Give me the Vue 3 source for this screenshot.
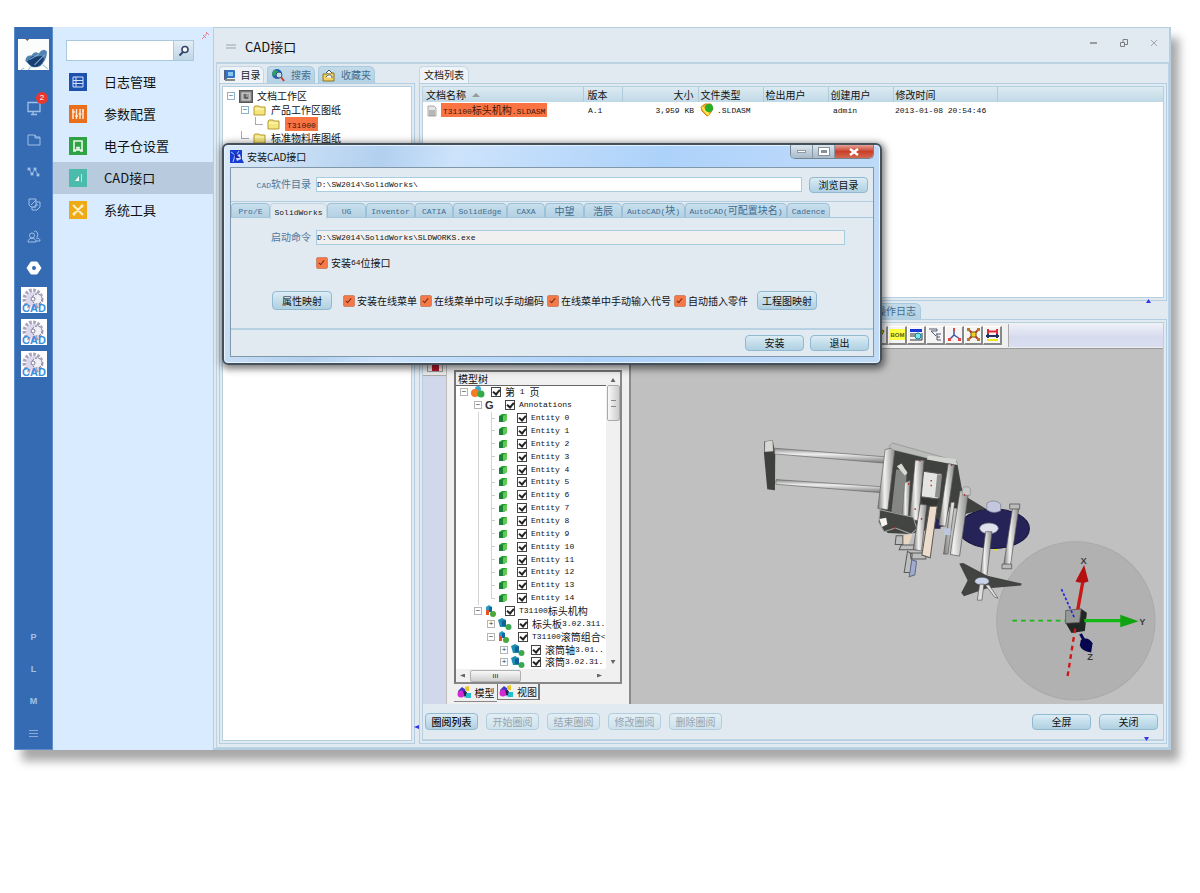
<script setup>
import { h, ref } from 'vue'

// Sets Latin runs in the half-width monospace face next to full-width Chinese.
const Mix = (props) =>
  props.t
    .split(/([\x20-\x7e]+)/)
    .filter(Boolean)
    .map((s) => h('span', { class: /^[\x20-\x7e]/.test(s) ? 'half' : 'full' }, s))
Mix.props = ['t']

const menu = [
  { name: '日志管理', color: '#1c52ae', icon: 'log' },
  { name: '参数配置', color: '#e96f1d', icon: 'param' },
  { name: '电子仓设置', color: '#2da343', icon: 'vault' },
  { name: 'CAD接口', color: '#4bbcac', icon: 'cad', active: true },
  { name: '系统工具', color: '#efab17', icon: 'tool' },
]
const rail = ['monitor', 'folder', 'flow', 'copy', 'people', 'gear']
const cadTabs = [
  ['Pro/E', 39], ['SolidWorks', 57], ['UG', 39], ['Inventor', 49], ['CATIA', 38], ['SolidEdge', 54],
  ['CAXA', 38], ['中望', 39], ['浩辰', 38], ['AutoCAD(块)', 63], ['AutoCAD(可配置块名)', 102], ['Cadence', 43],
].map(([name, w]) => ({ name, w }))
const options = ['安装在线菜单', '在线菜单中可以手动编码', '在线菜单中手动输入代号', '自动插入零件']
const model = [
  { d: 0, s: '−', k: 'page', t: '第 1 页' },
  { d: 1, s: '−', k: 'g', t: 'Annotations' },
  ...Array.from({ length: 15 }, (_, i) => ({ d: 2, s: '', k: 'cube', t: `Entity ${i}` })),
  { d: 1, s: '−', k: 'asm', t: 'T31100标头机构' },
  { d: 2, s: '+', k: 'part', t: '标头板3.02.311.' },
  { d: 2, s: '−', k: 'asm', t: 'T31100滚筒组合<' },
  { d: 3, s: '+', k: 'part', t: '滚筒轴3.01..' },
  { d: 3, s: '+', k: 'part', t: '滚筒3.02.31.' },
]
const review = ['圈阅列表', '开始圈阅', '结束圈阅', '修改圈阅', '删除圈阅']
const tools = ['cut', 'bom', 'find', 'tree', 'axis', 'burst', 'measure']
const path = ref('D:\\SW2014\\SolidWorks\\')
const command = ref('D:\\SW2014\\SolidWorks\\SLDWORKS.exe')
</script>

<template>
  <div class="page">
  <div class="window">
    <nav class="rail">
      <svg class="avatar" viewBox="0 0 30 30">
        <rect width="30" height="30" fill="#fbfdfd" />
        <path d="M7 21Q8 15 13 16Q16 11 20 14Q24 8 28 12Q28 18 25 22Q22 29 13 27Z" fill="#5283b1" />
        <path d="M9 22Q13 15 19 17Q25 15 25 20Q22 27 16 27Q11 26 9 22Z" fill="#173f72" />
        <path d="M11 20L20 15M16 25L26 15" stroke="#86aed0" />
        <path d="M6 28L3 30M12 27L10 30M24 25L29 29" stroke="#9bc1c7" fill="none" />
        <path d="M7 0h4l-2 2z" fill="#8a6349" />
      </svg>
      <a v-for="r in rail" :key="r" href="#" class="rail-item" :aria-label="r">
        <svg width="16" height="16" viewBox="0 0 16 16" fill="none" stroke="#9fbfe6">
          <g v-if="r === 'monitor'"><path d="M2 2.500h12v9H2zM7 12v2M5 14.500h6" stroke-width="1.300" /></g>
          <path v-else-if="r === 'folder'" d="M2 3h7l1 2h4v8H2zM9 3v3h5" />
          <g v-else-if="r === 'flow'" fill="#9fbfe6" stroke-width=".8"><rect x="2" y="4" width="2" height="2" /><rect x="8" y="4" width="2" height="2" /><rect x="5" y="9" width="2" height="2" /><rect x="11" y="10" width="2" height="2" /><path d="M3 5l3 5l3-5l3 6" fill="none" /></g>
          <path v-else-if="r === 'copy'" d="M3 3h7v8H5L3 9zM6 11v3h5l3-3V6h-4M5 9l5-5M8 12a3 3 0 0 1 4-3" />
          <path v-else-if="r === 'people'" d="M6 5a2.500 2.500 0 1 1 0 5a2.500 2.500 0 1 1 0-5M2 14c0-5 8-5 8 0zM8 4a2 3 0 1 1 3 5M10 10c3 0 4 1 4 3h-4" />
          <g v-else fill="#fff" stroke="none"><path d="M5 2h6l4 6l-4 6H5L1 8z" stroke="#fff" stroke-linejoin="round" /><circle cx="8" cy="8" r="2" fill="#356bb3" /></g>
        </svg>
        <b v-if="r === 'monitor'" class="badge">2</b>
      </a>
      <a v-for="n in 3" :key="n" href="#" class="rail-item cad">
        <svg width="26" height="26" viewBox="0 0 26 26">
          <rect width="26" height="26" fill="#fff" />
          <circle cx="12" cy="12" r="8.500" fill="none" stroke="#aaa4c0" stroke-width="4" stroke-dasharray="2.600 1.400" />
          <circle cx="12" cy="12" r="7" fill="#dcd7ec" />
          <circle cx="16" cy="12" r="5" fill="#eef0f6" stroke="#6c6c7c" stroke-dasharray="2 1.500" />
          <circle cx="12" cy="12" r="2" fill="#fff" stroke="#86809a" />
          <text x="13" y="25" text-anchor="middle" class="cad-word">CAD</text>
        </svg>
      </a>
      <span class="grow"></span>
      <span class="rail-item letter">P</span>
      <span class="rail-item letter">L</span>
      <span class="rail-item letter">M</span>
      <button class="rail-item letter bars" aria-label="菜单"><i></i><i></i><i></i></button>
    </nav>

    <aside class="side">
      <svg class="pin" width="7" height="7" viewBox="0 0 7 7"><path d="M2 5L0 7M1 3L4 6M3 4L5 1M4 0L7 3" stroke="#ee7e84" /></svg>
      <form class="search" @submit.prevent>
        <input type="text" aria-label="搜索" />
        <button aria-label="查找">
          <svg width="12" height="12" viewBox="0 0 12 12"><circle cx="7" cy="4.500" r="3" fill="#fff" stroke="#34466b" stroke-width="1.600" /><path d="M5 7L1.500 10.500" stroke="#34466b" stroke-width="2" /></svg>
        </button>
      </form>
      <a v-for="m in menu" :key="m.name" href="#" class="menu-item" :class="{ active: m.active }">
        <svg width="18" height="18" viewBox="0 0 18 18" fill="none" stroke="#fff">
          <rect width="18" height="18" :fill="m.color" stroke="none" />
          <path v-if="m.icon === 'log'" d="M4 4h10v10H4zM7 4v10M4 7.500h10M4 10.500h10" stroke="#d4e0f5" />
          <path v-else-if="m.icon === 'param'" d="M4 4v10M7.500 4v10M11 4v10M14 4v10M3 7h3M6 11h3M9.500 9h3M13 6h2" stroke="#ffe6d2" stroke-width="1.500" />
          <path v-else-if="m.icon === 'vault'" d="M5 4h8v9H5zM8 13v-2.500h2V13M4 14h3M11 14h3" stroke="#eaf7ea" stroke-width="1.600" />
          <g v-else-if="m.icon === 'cad'"><path d="M6 12l4-5v5z" fill="#fff" stroke="none" /><path d="M12.500 5v8" stroke="#b9e6df" /></g>
          <path v-else d="M4 4l10 10M14 4L4 14M4 4l2 2M12 4l2 2M4 12l2 2" stroke="#fff0c5" stroke-width="2" />
        </svg>
        <span>{{ m.name }}</span>
      </a>
    </aside>

    <main class="main">
      <header class="titlebar">
        <i class="grip"></i>
        <h1>CAD接口</h1>
        <button aria-label="最小化"><svg width="10" height="10"><path d="M1 5h7" stroke="#7c8085" stroke-width="1.500" /></svg></button>
        <button aria-label="还原"><svg width="10" height="10" fill="none" stroke="#7c8085"><path d="M1.500 4.500h4v4h-4zM4 4V1.500h4.500v5H6" /></svg></button>
        <button aria-label="关闭窗口"><svg width="10" height="10"><path d="M2 2l6 6M8 2L2 8" stroke="#a2a5aa" /></svg></button>
      </header>

      <div class="body">
        <section class="left">
          <div class="tabs">
            <button class="tab on t1"><svg width="13" height="13" viewBox="0 0 13 13"><rect x="1" y="1" width="3" height="10" fill="#555f80" /><rect x="3" y="1" width="9" height="8" rx="1" fill="#3172c4" /><rect x="5" y="3" width="5" height="4" fill="#8ac6ef" /><path d="M2 11h10" stroke="#888" stroke-width="2" /></svg>目录</button>
            <button class="tab t2"><svg width="15" height="14" viewBox="0 0 15 14"><circle cx="6" cy="6" r="5" fill="#2362b8" /><path d="M3 2l4 1v3l-4 2l-2-2zM8 6l3 1l-2 3z" fill="#2da65a" /><circle cx="8" cy="7" r="3" fill="#b9e1f5" stroke="#3a4a70" /><path d="M10 9l3 4" stroke="#d23b30" stroke-width="2" /></svg>搜索</button>
            <button class="tab t3"><svg width="14" height="13" viewBox="0 0 14 13"><path d="M1 5h4l1-1h6v8H1z" fill="#f0d264" stroke="#8d7420" /><path d="M4 4l3-3l3 3M4 8c2-3 6-3 6 1" stroke="#34507c" fill="#fff" /></svg>收藏夹</button>
          </div>
          <div class="frame tree-frame">
            <ul class="dir">
              <li><i class="pm">−</i><svg width="14" height="13" viewBox="0 0 14 13"><rect x=".5" y=".5" width="13" height="12" fill="#777" stroke="#555" /><rect x="3" y="3" width="8" height="7" fill="#999" stroke="#ddd" /><path d="M6 4v4h3" stroke="#333" fill="none" /></svg>文档工作区</li>
              <li class="d1"><i class="pm">−</i><svg class="fold" width="14" height="11" viewBox="0 0 14 11"><path d="M1 2l1-1h4l1 1h5v8H1z" fill="#f5e67c" stroke="#b69a36" /><path d="M2 4h9" stroke="#fffbd0" /></svg>产品工作区图纸</li>
              <li class="d2"><i class="elbow"></i><svg class="fold" width="14" height="11" viewBox="0 0 14 11"><path d="M1 2l1-1h4l1 1h5v8H1z" fill="#f5e67c" stroke="#b69a36" /><path d="M2 4h9" stroke="#fffbd0" /></svg><mark><Mix t="T31000" /></mark></li>
              <li class="d1"><i class="elbow"></i><svg class="fold" width="14" height="11" viewBox="0 0 14 11"><path d="M1 2l1-1h4l1 1h5v8H1z" fill="#f5e67c" stroke="#b69a36" /><path d="M2 4h9" stroke="#fffbd0" /></svg>标准物料库图纸</li>
            </ul>
          </div>
        </section>

        <section class="right">
          <div class="docs">
            <div class="tabs"><button class="tab on doc-tab">文档列表</button></div>
            <div class="frame">
              <table>
                <colgroup><col class="c160" /><col class="c39" /><col class="c76" /><col class="c65" /><col class="c65" /><col class="c65" /><col class="c104" /><col /></colgroup>
                <thead><tr><th>文档名称<i class="sort"></i></th><th>版本</th><th class="num">大小</th><th>文件类型</th><th>检出用户</th><th>创建用户</th><th>修改时间</th><th></th></tr></thead>
                <tbody><tr>
                  <td class="name"><svg width="12" height="12" viewBox="0 0 12 12"><path d="M2 1h6l2 2v8H2z" fill="#e5e5e5" stroke="#aaa" /><path d="M3 6h6M3 8h6M3 10h6" stroke="#888" /></svg><mark><Mix t="T31100标头机构.SLDASM" /></mark></td>
                  <td><Mix t="A.1" /></td>
                  <td class="num"><Mix t="3,959 KB" /></td>
                  <td class="type"><svg width="14" height="14" viewBox="0 0 14 14"><path d="M1 4l4-3h6l2 5l-4 6l-2 1l-5-5z" fill="#f4ad25" stroke="#cf8115" /><path d="M2 4l4 5l3 3" stroke="#ffec59" stroke-width="2" /><circle cx="9" cy="5" r="4" fill="#28ae28" /></svg><Mix t=".SLDASM" /></td>
                  <td></td><td><Mix t="admin" /></td><td><Mix t="2013-01-08 20:54:46" /></td><td></td>
                </tr></tbody>
              </table>
            </div>
            <i class="fold-mark above"></i>
          </div>

          <div class="preview">
            <div class="tabs"><button class="tab log-tab">操作日志</button></div>
            <div class="frame preview-frame">
              <div class="toolbar">
                <div class="tool-set">
                  <button v-for="t in tools" :key="t" :aria-label="t">
                    <svg width="15" height="15" viewBox="0 0 15 15" fill="none">
                      <g v-if="t === 'cut'"><path d="M2 5l7-3l4 2l-5 8z" fill="#e4dc15" stroke="#5d5b10" /><path d="M1 9h4v5H1z" fill="#a01035" /></g>
                      <g v-else-if="t === 'bom'"><rect y="2" width="15" height="11" fill="#ffff41" /><text x="7.500" y="10" text-anchor="middle" class="bom">BOM</text></g>
                      <g v-else-if="t === 'find'"><path d="M1 2h12v3H1z" fill="#1937d8" /><path d="M1 7h6M1 9h5M1 13h12V6" stroke="#333" /><circle cx="9" cy="9" r="3" fill="#79e9ee" stroke="#167d8c" /></g>
                      <path v-else-if="t === 'tree'" d="M1 2h8v2H3M3 4l5 5M8 7h5M9 7v6h4M9 10h3" stroke="#55596e" />
                      <g v-else-if="t === 'axis'"><path d="M7 2v6l-5 5M7 8l6 4" stroke="#4052a0" stroke-width="1.500" /><path d="M6 1h2v3H6zM1 11h3v3H1zM11 11h3v3h-3z" fill="#e34444" /></g>
                      <g v-else-if="t === 'burst'"><path d="M2 2l11 11M13 2L2 13" stroke="#c93525" stroke-width="2" /><rect x="5" y="5" width="5" height="5" fill="#f2cf24" stroke="#705d12" /><path d="M1 1h3v3H1zM11 1h3v3h-3zM1 11h3v3H1zM11 11h3v3h-3z" fill="#b77b20" /></g>
                      <g v-else><path d="M2 2h2v5H2zM11 2h2v5h-2z" fill="#e12a36" /><path d="M3 4.500h9" stroke="#e12a36" stroke-width="2" /><path d="M1 9h13M3 7v4M12 7v4" stroke="#222f5c" stroke-width="2" /><path d="M2 13h11" stroke="#eee51e" stroke-width="2" /></g>
                    </svg>
                  </button>
                </div>
                <div class="tool-fill"></div>
              </div>

              <div class="viewer">
                <div class="strip"><div class="strip-btn"><i></i></div></div>
                <div class="pane">
                  <div class="treebox">
                    <div class="tree-head">模型树</div>
                    <div class="tree-mid">
                      <ul class="model">
                        <li v-for="(m, i) in model" :key="i" :class="['lv' + m.d, { leaf: !m.s, endleaf: i === 16 }]">
                          <i v-if="m.s" class="pm gray">{{ m.s }}</i><i v-else class="dash"></i>
                          <svg width="14" height="12" viewBox="0 0 14 12">
                            <g v-if="m.k === 'page'"><circle cx="7" cy="3" r="3" fill="#38a9d2" /><circle cx="4" cy="7" r="4" fill="#f47a25" /><circle cx="10" cy="8" r="3.500" fill="#34a946" /></g>
                            <text v-else-if="m.k === 'g'" x="0" y="10" class="gmark">G</text>
                            <g v-else-if="m.k === 'cube'"><path d="M2 4l3-2h5v6l-3 2H2z" fill="#259e35" /><path d="M6 4l4-2v6l-4 2z" fill="#61cb52" /><path d="M2 4h4v6H2z" fill="#188238" /></g>
                            <g v-else-if="m.k === 'asm'"><path d="M1 2l3-2l3 2v5H1z" fill="#2b9bc4" /><path d="M1 5h3v5H1z" fill="#e85026" /><path d="M4 2h3v5H4z" fill="#1366a6" /><circle cx="8" cy="9" r="3" fill="#47a83c" /></g>
                            <g v-else><path d="M0 2l4-2l4 2v7H2z" fill="#1b8fb2" /><path d="M4 3l4-1v6H4z" fill="#126099" /><circle cx="10.500" cy="9" r="3" fill="#3ca851" /></g>
                          </svg>
                          <label><input type="checkbox" checked /><Mix :t="m.t" /></label>
                        </li>
                      </ul>
                      <div class="vbar"><i class="arrow up"></i><b></b><i class="arrow down"></i></div>
                    </div>
                    <div class="hbar"><i class="arrow lt"></i><b>ııı</b><span></span><i class="arrow rt"></i><span class="corner"></span></div>
                  </div>
                  <div class="pane-tabs">
                    <button><svg width="15" height="13" viewBox="0 0 15 13"><path d="M1 5l4-4l4 3v6H2z" fill="#3d36c5" /><circle cx="4" cy="8" r="3.500" fill="#d329d2" /><path d="M8 1l4-1v5H8z" fill="#e9c525" /><path d="M9 7h5v5H9z" fill="#24bed1" /><path d="M6 5l4 1l-2 6z" fill="#26204d" /></svg>模型</button>
                    <button class="second"><svg width="15" height="13" viewBox="0 0 15 13"><path d="M1 5l4-4l4 3v6H2z" fill="#3d36c5" /><circle cx="4" cy="8" r="3.500" fill="#d329d2" /><path d="M8 1l4-1v5H8z" fill="#e9c525" /><path d="M9 7h5v5H9z" fill="#24bed1" /><path d="M6 5l4 1l-2 6z" fill="#26204d" /></svg>视图</button>
                  </div>
                </div>

                <svg class="scene" viewBox="631 348 531 356" preserveAspectRatio="xMaxYMax slice">
                  <defs>
                    <linearGradient id="rod"><stop offset="0" stop-color="#777" /><stop offset=".4" stop-color="#f1f1ef" /><stop offset="1" stop-color="#858585" /></linearGradient>
                    <linearGradient id="bar" x2="0" y2="1"><stop offset="0" stop-color="#8a8a8a" /><stop offset=".4" stop-color="#eee" /><stop offset="1" stop-color="#777" /></linearGradient>
                  </defs>
                  <circle cx="1075" cy="621" r="79" fill="#b1b1b1" stroke="#a9a9a9" />
                  <g transform="translate(749 420) scale(.3333)">
                    <path d="M45 66L70 62L78 100L77 212L54 209L44 100Z" fill="#3e403e" />
                    <path d="M47 66L70 62L72 95L46 97Z" fill="#d7d8d3" stroke="#777" />
                    <path d="M76 86L412 112L410 131L76 103Z" fill="url(#bar)" stroke="#666" stroke-width="2" />
                    <path d="M80 180L408 202L407 220L80 194Z" fill="url(#bar)" stroke="#666" stroke-width="2" />
                    <path d="M430 75L622 126L640 225L710 268L650 282L603 315L480 343L415 340L388 310L395 260Z" fill="#40423f" />
                    <ellipse cx="733" cy="327" rx="106" ry="59" fill="#252358" stroke="#17163c" stroke-width="3" />
                    <path d="M600 262l45 10l-12 75l-60 10z" fill="#c0c0c0" />
                    <path d="M555 295q18 0 18 32h-18z" fill="#252358" />
                    <path d="M712 250q22-14 41 3v20q-22 12-42-3z" fill="#c3c8df" stroke="#777992" stroke-width="2" />
                    <path d="M440 150L472 153L464 286L426 276Z" fill="#858784" />
                    <path d="M442 140l14-8l18 28l-8 8z" fill="#d8d8d4" />
                    <path d="M407 90L437 83L415 270L385 266Z" fill="url(#rod)" stroke="#5e605e" stroke-width="2" />
                    <path d="M428 70L620 124L615 136L430 91L418 81Z" fill="#b9bbb8" stroke="#595a59" />
                    <path d="M535 108L618 118L624 136L532 120Z" fill="#d2d4d0" />
                    <path d="M522 155L577 163L566 238L515 231Z" fill="#e4e5e2" stroke="#555" stroke-width="3" />
                    <path d="M563 164l14 2l-7 69l-14-3z" fill="#8e908d" />
                    <path d="M512 235l56 6l-10 20l-36-4z" fill="#333533" />
                    <path d="M466 190l16-8l-6 110l-18-5z" fill="url(#rod)" stroke="#555" />
                    <path d="M497 122h27l-18 182l-26-7z" fill="url(#rod)" stroke="#555" stroke-width="2" />
                    <path d="M596 132l19 4l-27 184l-20-4z" fill="url(#rod)" stroke="#555" stroke-width="2" />
                    <path d="M391 270L491 293L502 327L485 343L438 325L404 336L388 308Z" fill="#424541" stroke="#a5a5a5" stroke-width="3" />
                    <path d="M390 298l20-4l4 20l-17 8z" fill="#f6f5ed" />
                    <path d="M461 348l28-6l-12 32l-20 1z" fill="#ead7c2" />
                    <path d="M440 348h20v26h-23zM455 376h53v14h-59zM482 400h47v18h-44zM474 395l14 8l-4 55h-20z" fill="#bdbfbe" stroke="#585a58" stroke-width="3" />
                    <path d="M512 254l20 2l-16 138l-25-5z" fill="url(#rod)" stroke="#555" stroke-width="2" />
                    <path d="M540 260h23l-21 154l-25-8z" fill="#ecdccb" stroke="#5e5953" stroke-width="3" />
                    <path d="M487 420l14 5l-5 40l-17 6z" fill="#9facd0" stroke="#626b83" stroke-width="3" />
                    <path d="M604 248h11l-20 155h-13zM631 214l27-5l-28 200l-28-5z" fill="url(#rod)" stroke="#555" stroke-width="2" />
                    <path d="M638 207q13-12 24 0v20h-23z" fill="#c5c6c6" stroke="#555" />
                    <path d="M584 326h19v20h-20z" fill="#bdc8df" />
                    <path d="M790 257l18 4l-26 178l-20-3z" fill="url(#rod)" stroke="#555" stroke-width="2" />
                    <path d="M780 253h30v15h-30zM757 433h29v14h-29z" fill="#bbb" stroke="#444" stroke-width="2" />
                    <ellipse cx="718" cy="326" rx="28" ry="16" fill="#dfe2ed" stroke="#73777f" stroke-width="2" />
                    <path d="M708 336h19l-17 148h-20z" fill="url(#rod)" stroke="#555" stroke-width="2" />
                    <path d="M629 431L641 430L713 468L816 491L814 497L710 506L643 529L635 519L654 482Z" fill="#414441" />
                    <ellipse cx="697" cy="484" rx="21" ry="11" fill="#cad3e8" stroke="#666c78" />
                    <path d="M690 493h13l-6 48h-14zM718 495l27 40l-10-3l-28-36z" fill="#ddd" stroke="#555" stroke-width="2" />
                    <path d="M733 388h10v4h-10z" fill="#e9df20" />
                    <path d="M543 181h4v5h-4zM543 195h4v5h-4zM509 121h4v5h-4zM495 266h4v5h-4zM514 295h4v5h-4zM475 190h4v5h-4zM604 134h4v5h-4zM643 223h4v5h-4zM434 322h4v5h-4z" fill="#b52929" />
                  </g>
                  <g transform="translate(979 530) scale(.3333)" fill="none">
                    <path d="M98 272H258" stroke="#18b818" stroke-width="5" stroke-dasharray="14 12" />
                    <path d="M302 312l12 22" stroke="#0a0860" stroke-width="9" />
                    <path d="M303 330q22-12 35 10l-4 28q-30-5-34-22z" fill="#06054e" />
                    <path d="M258 242l46-5l17 12l-6 54l-40 6l-17-29z" fill="#222725" />
                    <path d="M258 242l46-5l-5 41l-42 2z" fill="#969996" stroke="#555" stroke-width="2" />
                    <path d="M245 178l38 84" stroke="#2525e8" stroke-width="5" stroke-dasharray="8 6" />
                    <path d="M286 296l-23 145" stroke="#cf1515" stroke-width="7" stroke-dasharray="14 12" />
                    <path d="M294 238l15-82" stroke="#c91818" stroke-width="10" />
                    <path d="M287 155l26-49l13 49q-20 8-39 0" fill="#b51010" />
                    <path d="M313 272h110" stroke="#14b814" stroke-width="10" />
                    <path d="M421 255l55 19l-55 18z" fill="#11a411" />
                    <text x="302" y="103">X</text><text x="478" y="286">Y</text><text x="322" y="390">Z</text>
                  </g>
                </svg>
              </div>

              <footer class="actions">
                <button v-for="(r, i) in review" :key="r" class="btn small" :disabled="i > 0" :class="{ first: i === 0 }">{{ r }}</button>
                <span class="grow"></span>
                <button class="btn">全屏</button><button class="btn">关闭</button>
              </footer>
            </div>
          </div>
        </section>
      </div>
      <i class="fold-mark side-mark"></i><i class="fold-mark base-mark"></i>

      <section class="dialog" role="dialog" aria-label="安装CAD接口">
        <header>
          <svg width="14" height="14" viewBox="0 0 14 14"><path d="M0 0h12v9l2 4H0z" fill="#183bd1" /><path d="M1 2l4 3l-2 7M9 1L7 4" stroke="#aecbff" fill="none" /><path d="M5 6l5-2l1 5l-4 2z" fill="#fff" opacity=".8" /><path d="M4 2l6 6H5z" fill="#1a24ad" /></svg>
          <h2>安装CAD接口</h2>
          <div class="caption"><button aria-label="最小化"><i class="min"></i></button><button aria-label="最大化"><i class="max"></i></button><button class="x" aria-label="关闭"><svg width="10" height="8"><path d="M1 1l8 6M9 1L1 7" stroke="#fff" stroke-width="2.500" /></svg></button></div>
        </header>
        <div class="dlg-body">
          <div class="field path-row"><label for="dir"><Mix t="CAD软件目录" /></label><input id="dir" v-model="path" type="text" /><button class="btn">浏览目录</button></div>
          <div class="cad-tabs"><button v-for="(t, i) in cadTabs" :key="t.name" :class="{ on: i === 1 }" :style="{ width: t.w + 'px' }"><Mix :t="t.name" /></button></div>
          <div class="tab-panel">
            <div class="field cmd-row"><label for="cmd">启动命令</label><input id="cmd" v-model="command" type="text" readonly /></div>
            <label class="check x64"><input type="checkbox" checked /><Mix t="安装64位接口" /></label>
            <div class="option-row">
              <button class="btn tall">属性映射</button>
              <label v-for="o in options" :key="o" class="check"><input type="checkbox" checked />{{ o }}</label>
              <button class="btn tall">工程图映射</button>
            </div>
          </div>
          <div class="dlg-foot"><button class="btn">安装</button><button class="btn">退出</button></div>
        </div>
      </section>
    </main>
  </div>
  </div>
</template>

<style>
body { background: #fff; }
.half { font-family: "Liberation Mono", monospace; font-size: 8px; white-space: pre; }
</style>

<style scoped>
* { box-sizing: border-box; }
.page { min-height: 100vh; padding: 27px 29px 0 14px; }
.window { display: flex; height: calc(100vh - 170px); font: 10px/14px "Noto Sans CJK SC", sans-serif; color: #111; box-shadow: 8px 11px 9px rgba(0, 0, 0, .34); }
button, input { font: inherit; color: inherit; margin: 0; padding: 0; border: 0; background: none; }
button { white-space: nowrap; }
a { color: inherit; text-decoration: none; }
ul { list-style: none; margin: 0; padding: 0; }
i { font-style: normal; }
h1, h2 { margin: 0; font-weight: 400; }
svg { flex: none; }
.grow { flex: 1; }
mark { background: #fa7343; color: #3c1a0c; padding: 0 2px; height: 14px; line-height: 14px; }

.rail { flex: 0 0 39px; display: flex; flex-direction: column; align-items: center; background: #356bb3; border: 1px solid #5d8ccb; border-top: 0; }
.avatar { width: 31px; height: 31px; margin: 12px 0 22px; }
.rail-item { position: relative; height: 32px; width: 37px; display: flex; align-items: center; justify-content: center; flex: none; }
.badge { position: absolute; right: 4px; top: 0; width: 12px; height: 12px; border-radius: 6px; background: #e8372d; color: #fff; font: 8px/12px "Liberation Sans", sans-serif; text-align: center; }
.cad-word { font: bold 11px "Liberation Sans", sans-serif; fill: #3b91e0; }
.letter { color: #a3c1e6; font: bold 9px "Liberation Sans", sans-serif; }
.bars { flex-direction: column; gap: 2px; }
.bars i { width: 9px; height: 1px; background: #89abd9; }

.side { flex: 0 0 160px; min-width: 0; position: relative; background: #d9ecff; }
.pin { position: absolute; right: 4px; top: 5px; }
.search { display: flex; margin: 13px 19px 5px 13px; height: 21px; border: 1px solid #abc8dd; }
.search input { flex: 1; width: 0; min-width: 0; background: #fff; padding: 0 4px; }
.search button { flex: 0 0 20px; background: linear-gradient(#e4eef6, #bfd5e6); border-left: 1px solid #abc8dd; display: flex; align-items: center; justify-content: center; }
.menu-item { display: flex; align-items: center; gap: 17px; height: 32px; padding-left: 16px; font-size: 13px; }
.menu-item.active { background: #b8cbde; }

.main { flex: 1; min-width: 0; position: relative; display: flex; flex-direction: column; background: #e1e9f1; border: 1px solid #b6cfe0; border-right-width: 2px; border-bottom-width: 2px; padding-left: 2px; }
.titlebar { height: 34px; flex: none; display: flex; align-items: center; padding: 3px 10px 0 10px; }
.grip { width: 10px; height: 5px; border: solid #bec6cf; border-width: 2px 0; margin-right: 9px; }
.titlebar h1 { flex: 1; font-size: 13px; line-height: 20px; }
.titlebar button { width: 10px; height: 10px; display: flex; margin: -8px 0 0 20px; }
.body { flex: 1; min-height: 0; display: flex; gap: 4px; border: solid #bcd3e3; border-width: 2px 1px 1px; padding: 2px 1px 3px 2px; }
.left { flex: 0 0 196px; display: flex; flex-direction: column; }
.right { flex: 1; min-width: 0; display: flex; flex-direction: column; }
.tabs { display: flex; height: 17px; flex: none; gap: 3px; }
.tab { display: flex; align-items: center; justify-content: center; gap: 5px; background: linear-gradient(#c3dbea, #b3d1e3); color: #466c8b; border: 1px solid #a9c9dc; border-bottom: 0; border-radius: 4px 6px 0 0; padding: 0 3px; }
.tab.on { background: #eef3f8; color: #1b1b1b; border-color: #c4d6e3; }
.t1 { width: 45px; } .t2 { width: 48px; } .t3 { width: 57px; }
.frame { flex: 1; min-height: 0; padding: 3px; border: 1px solid #b3cee0; box-shadow: inset 0 0 0 2px #e1e9f1, inset 0 0 0 3px #b7d0e1; display: flex; flex-direction: column; }
.dir { flex: 1; background: #fff; padding: 2px 4px; }
.dir li { display: flex; align-items: center; height: 14px; gap: 4px; white-space: nowrap; }
.dir .d1 { padding-left: 14px; }
.dir .d2 { padding-left: 28px; }
.pm { width: 8px; height: 8px; border: 1px solid #8fb1c6; color: #34657e; font: 8px/6px "Liberation Sans", sans-serif; text-align: center; flex: none; background: #fff; }
.pm.gray { border-color: #b4b4b4; color: #333; }
.elbow { width: 8px; height: 8px; border: solid #a9a9a9; border-width: 0 0 1px 1px; margin-bottom: 7px; flex: none; }

.docs { flex: 236 1 0; position: relative; min-height: 0; display: flex; flex-direction: column; }
.doc-tab { width: 50px; }
.docs .frame { background: #fff; }
table { width: 100%; table-layout: fixed; border-collapse: collapse; }
th, td { height: 15px; padding: 0 2px; text-align: left; font-weight: 400; white-space: nowrap; line-height: 14px; }
th { background: linear-gradient(#dceaf2, #c0d9e6); border-right: 1px solid #afcbdc; }
th:last-child { border: 0; }
th:first-child, td:first-child { padding-left: 3px; }
th:nth-child(2) { padding-left: 4px; }
td:nth-child(2), td:nth-child(6) { padding-left: 5px; }
.num { text-align: right; padding-right: 4px; }
.name svg { vertical-align: middle; margin-right: 3px; }
.name mark { display: inline-block; }
.type svg { vertical-align: middle; margin-right: 3px; }
.sort { display: inline-block; margin-left: 6px; border: solid transparent; border-width: 0 4px 4px; border-bottom-color: #999; vertical-align: 2px; }
.c160 { width: 160px; } .c39 { width: 39px; } .c76 { width: 76px; } .c65 { width: 65px; } .c104 { width: 104px; }
.fold-mark { position: absolute; width: 5px; height: 4px; background: #3434e8; clip-path: polygon(50% 0, 100% 100%, 0 100%); }
.fold-mark.above { right: 16px; bottom: -2px; }
.side-mark { left: 200px; bottom: 19px; clip-path: polygon(0 50%, 100% 0, 100% 100%); }
.base-mark { right: 20px; bottom: 7px; clip-path: polygon(0 0, 100% 0, 50% 100%); }

.preview { flex: 443 1 0; min-height: 0; display: flex; flex-direction: column; padding-top: 2px; }
.preview .tabs { height: 16px; }
.log-tab { width: 50px; margin-left: 452px; }
.toolbar { display: flex; flex: none; height: 26px; padding: 1px 0 1px; background: #f0f0f0; border-bottom: 1px solid #999; }
.tool-set { flex: 1; display: flex; justify-content: flex-end; align-items: center; padding-right: 6px; }
.tool-set button { width: 19px; height: 19px; display: flex; align-items: center; justify-content: center; background: #f4f4f4; border: solid; border-width: 1px 2px 2px 1px; border-color: #fff #888 #888 #fff; }
.tool-fill { flex: 0 0 155px; background: linear-gradient(#eef0f8, #d5daed 60%, #d9def0); border-left: 1px solid #aaa; }
.bom { font: bold 6px "Liberation Sans", sans-serif; fill: #5b5c10; }
.viewer { flex: 1; min-height: 0; display: flex; }
.strip { flex: 0 0 24px; background: #d2d8ec; border-right: 1px solid #bbb; }
.strip-btn { height: 27px; background: #ededed; border-bottom: 1px solid #aaa; padding: 3px 2px; display: flex; align-items: flex-end; justify-content: center; }
.strip-btn i { width: 16px; height: 9px; background: linear-gradient(90deg, #eee 4px, #b8172c 4px 11px, #eee 11px); border: solid #999; border-width: 0 1px 1px; }
.pane { flex: 0 0 184px; display: flex; flex-direction: column; background: #f0f0f0; border-right: 2px solid #8a8a8a; padding: 21px 7px 2px 7px; }
.treebox { flex: 1; min-height: 0; display: flex; flex-direction: column; background: #fff; border: 2px solid #888; border-left-color: #777; border-top-color: #777; }
.tree-head { height: 14px; line-height: 13px; background: #f0f0f0; border-bottom: 1px solid #666; padding-left: 2px; flex: none; }
.tree-mid { flex: 1; min-height: 0; display: flex; }
.model { flex: 1; min-width: 0; display: flex; flex-direction: column; }
.model li { flex: 1 1 0; min-height: 0; display: flex; align-items: center; white-space: nowrap; position: relative; }
.model svg { margin-left: 3px; }
.model label { display: flex; align-items: center; line-height: 12px; }
.lv0 { padding-left: 4px; } .lv1 { padding-left: 18px; } .lv2 { padding-left: 31px; } .lv3 { padding-left: 44px; }
.leaf::before { content: ""; position: absolute; left: 35px; top: 0; bottom: 0; border-left: 1px solid #d4d4d4; }
.leaf::after { content: ""; position: absolute; left: 22px; top: 0; bottom: 0; border-left: 1px solid #d4d4d4; }
.endleaf::before { bottom: 50%; }
.dash { width: 4px; height: 1px; background: #ccc; margin-left: 4px; flex: none; }
.leaf svg { margin-left: 2px; }
.model input { appearance: none; width: 10px; height: 10px; border: 1px solid #444; background: #fff; position: relative; margin: 0 4px 0 6px; flex: none; }
.model input::after { content: ""; position: absolute; left: 2px; top: 0; width: 3px; height: 5px; border: solid #222; border-width: 0 2px 2px 0; transform: rotate(40deg); }
.vbar { flex: 0 0 14px; display: flex; flex-direction: column; align-items: center; background: #f0f0f0; justify-content: space-between; margin-top: -13px; }
.vbar b { width: 13px; height: 36px; margin: 3px 0 auto; border: 1px solid #aaa; border-radius: 2px; background: linear-gradient(90deg, #f8f8f8, #ccc); position: relative; }
.vbar b::after { content: ""; position: absolute; left: 3px; top: 14px; width: 5px; height: 5px; border: solid #888; border-width: 1px 0; }
.arrow { width: 5px; height: 4px; background: #666; flex: none; }
.up { margin-top: 5px; clip-path: polygon(50% 0, 100% 100%, 0 100%); }
.down { margin-bottom: 5px; clip-path: polygon(0 0, 100% 0, 50% 100%); }
.hbar { height: 13px; flex: none; display: flex; align-items: center; background: #f0f0f0; padding-left: 4px; }
.hbar b { width: 51px; height: 12px; margin-left: 5px; border: 1px solid #b0b0b0; border-radius: 2px; background: linear-gradient(#f8f8f8, #d0d0d0); font: 7px/9px "Liberation Sans", sans-serif; text-align: center; }
.hbar span { flex: 1; }
.hbar .corner { flex: 0 0 18px; }
.lt { clip-path: polygon(0 50%, 100% 0, 100% 100%); }
.rt { clip-path: polygon(0 0, 100% 50%, 0 100%); }
.pane-tabs { display: flex; height: 18px; flex: none; }
.pane-tabs button { width: 43px; display: flex; align-items: center; justify-content: center; gap: 3px; border-bottom: 1px solid #888; }
.pane-tabs .second { height: 16px; border: solid #777; border-width: 0 2px 1px 1px; }
.scene { flex: 1; min-width: 0; height: 100%; background: #c0c0c0; }
.scene text { font: bold 28px "Liberation Sans", sans-serif; fill: #3c3c3c; }
.gmark { font: bold 11px "Liberation Sans", sans-serif; fill: #333; }
.actions { height: 36px; flex: none; display: flex; align-items: center; gap: 8px; padding: 0 5px 0 2px; border-bottom: 1px solid #c1d6e4; }
.btn { width: 59px; height: 16px; line-height: 14px; border: 1px solid #91b9cf; border-radius: 4px; background: linear-gradient(#dcecf5, #c6dfec 45%, #b0d0e2); flex: none; }
.btn.small { width: 53px; height: 17px; }
.btn:disabled { color: #98a4ac; border-color: #b2cedd; background: linear-gradient(#e2eef5, #cee2ec); }
.first { font-weight: 500; }
.tall { height: 19px; width: 60px; }

.dialog { position: absolute; left: 8px; top: 115px; width: 660px; height: 222px; padding: 1px 6px 6px; border: 2px solid #44515c; border-radius: 6px; background: linear-gradient(110deg, #dceafa 0, #b2d0ef 22%, #cde3fb 32%, #add2fa 60%, #bad8fa 80%, #c2dcf6 100%); box-shadow: 1px 2px 7px 2px rgba(0, 0, 0, .5), inset 0 0 0 1px #e5f2ff; display: flex; flex-direction: column; }
.dialog header { height: 21px; flex: none; display: flex; align-items: center; gap: 3px; }
.dialog h2 { flex: 1; font-size: 10px; line-height: 14px; }
.caption { display: flex; align-self: flex-start; height: 14px; margin-top: -1px; border: 1px solid #758592; border-top: 0; border-radius: 0 0 5px 5px; overflow: hidden; }
.caption button { width: 22px; display: flex; align-items: center; justify-content: center; background: linear-gradient(#dbe5ee, #a9bac9); border-right: 1px solid #8796a3; }
.caption .x { width: 38px; border: 0; background: linear-gradient(#e5a398, #c93f2a 50%, #d26951); }
.min { width: 9px; height: 3px; background: #fff; border: 1px solid #909aa5; }
.max { width: 10px; height: 7px; border: 2px solid #fff; outline: 1px solid #87919b; background: #87919b; }
.dlg-body { flex: 1; min-height: 0; display: flex; flex-direction: column; border: 1px solid #8198aa; background: #e1e9f1; }
.field { display: flex; align-items: center; gap: 5px; }
.field label { flex: 0 0 80px; text-align: right; color: #52789a; }
.field input { flex: 1; min-width: 0; height: 15px; border: 1px solid #a9cde0; background: #fff; font: 8px "Liberation Mono", monospace; padding: 0; }
.path-row { height: 34px; padding-right: 5px; border-bottom: 1px solid #b3cee0; }
.path-row .btn { margin-left: 2px; }
.cad-tabs { display: flex; height: 16px; padding-top: 1px; flex: none; border-bottom: 1px solid #a7c7dc; }
.cad-tabs button { height: 14px; line-height: 12px; background: linear-gradient(#c8dfed, #b3d1e3); color: #426c90; border: 1px solid #9fc1d7; border-bottom: 0; border-radius: 4px 5px 0 0; flex: none; }
.cad-tabs .on { height: 16px; background: #e1e9f1; color: #222; border-color: #c2d5e2; }
.tab-panel { flex: 1; min-height: 0; border-bottom: 2px solid #b6d1e1; }
.cmd-row { height: 16px; margin: 11px 28px 0 0; }
.cmd-row input { background: #f0f0f0; }
.check { display: flex; align-items: center; gap: 3px; white-space: nowrap; }
.check input { appearance: none; width: 12px; height: 12px; border: 1px solid #c98770; border-radius: 2px; background: #f67847; position: relative; flex: none; }
.check input::after { content: ""; position: absolute; left: 3px; top: 1px; width: 2px; height: 5px; border: solid #6e2e20; border-width: 0 1px 1px 0; transform: rotate(40deg); }
.check.x64 { margin: 11px 0 0 85px; height: 14px; gap: 0; }
.check.x64 input { margin-right: 3px; }
.option-row { display: flex; align-items: center; justify-content: space-between; margin: 21px 56px 0 41px; }
.option-row .check { gap: 2px; }
.option-row .btn:first-child { margin-right: 8px; }
.option-row .btn:last-child { margin-left: 6px; }
.dlg-foot { height: 26px; flex: none; display: flex; align-items: center; justify-content: flex-end; gap: 6px; padding-right: 4px; }
</style>
